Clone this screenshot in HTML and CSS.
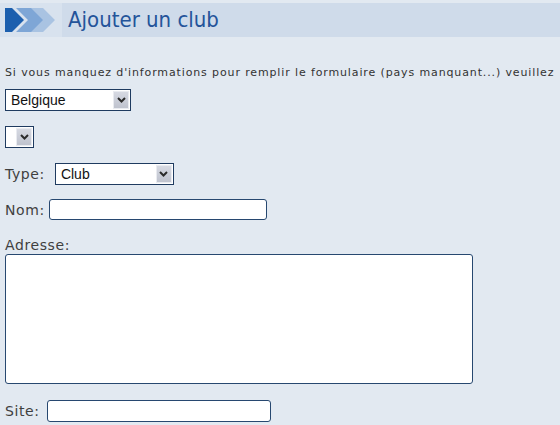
FILE: index.html
```html
<!DOCTYPE html>
<html lang="fr">
<head>
    <meta charset="UTF-8">
    <title>Ajouter un club</title>
    <link rel="stylesheet" href="styles.css">
</head>
<body>
    <div class="header">
        <div class="header-icon">
            <svg width="60" height="34" viewBox="0 0 60 34">
                <polygon points="28,5 43,5 55,17 43,29 28,29 40,17" fill="#a9c3e2"/>
                <polygon points="16,5 31,5 43,17 31,29 16,29 28,17" fill="#7ea6d6"/>
                <polygon points="5,5 12,5 24,17 12,29 5,29" fill="#1c5fae"/>
            </svg>
        </div>
        <h1>Ajouter un club</h1>
    </div>

    <div class="content">
        <p class="info">Si vous manquez d'informations pour remplir le formulaire (pays manquant...) veuillez</p>

        <div class="row">
            <div class="select-box country">
                <select id="country">
                    <option>Belgique</option>
                </select>
                <span class="arrow"><svg width="9" height="6" viewBox="0 0 9 6"><path d="M1 1 L4.5 4.5 L8 1" fill="none" stroke="#2b2b2b" stroke-width="2"/></svg></span>
            </div>
        </div>

        <div class="row">
            <div class="select-box empty">
                <select id="region"></select>
                <span class="arrow"><svg width="9" height="6" viewBox="0 0 9 6"><path d="M1 1 L4.5 4.5 L8 1" fill="none" stroke="#2b2b2b" stroke-width="2"/></svg></span>
            </div>
        </div>

        <div class="row row-type">
            <label for="type">Type:</label>
            <div class="select-box type">
                <select id="type">
                    <option>Club</option>
                </select>
                <span class="arrow"><svg width="9" height="6" viewBox="0 0 9 6"><path d="M1 1 L4.5 4.5 L8 1" fill="none" stroke="#2b2b2b" stroke-width="2"/></svg></span>
            </div>
        </div>

        <div class="row row-nom">
            <label for="nom">Nom:</label>
            <input type="text" id="nom" class="text-input nom">
        </div>

        <label for="adresse" class="block-label">Adresse:</label>
        <textarea id="adresse"></textarea>

        <div class="row row-site">
            <label for="site">Site:</label>
            <input type="text" id="site" class="text-input site">
        </div>
    </div>
</body>
</html>
```

FILE: styles.css
```css
* {
    margin: 0;
    padding: 0;
    box-sizing: border-box;
}

body {
    background-color: #e2e9f1;
    font-family: "DejaVu Sans", Verdana, sans-serif;
    color: #3a3a3a;
}

.header {
    display: flex;
    align-items: center;
    margin-top: 3px;
    height: 34px;
    background-color: #cfdbea;
}

.header-icon {
    width: 62px;
    height: 34px;
    background-color: #d8e2ee;
}

.header-icon svg {
    display: block;
}

.header h1 {
    margin-left: 6px;
    font-family: "DejaVu Sans Condensed", "DejaVu Sans", sans-serif;
    font-size: 22px;
    font-weight: normal;
    color: #24549a;
    line-height: 34px;
}

.content {
    padding-left: 5px;
}

.info {
    margin-top: 30px;
    font-size: 11px;
    line-height: 12px;
    letter-spacing: 0.87px;
    white-space: nowrap;
    color: #333;
}

.row {
    display: flex;
    align-items: center;
    gap: 7px;
    margin-top: 15px;
}

.info + .row {
    margin-top: 10px;
}

.row-type {
    gap: 10px;
}

.row-nom {
    margin-top: 14px;
    gap: 4px;
}

label {
    font-size: 14px;
    line-height: 16px;
    letter-spacing: 0.6px;
    color: #3f3f3f;
}

.select-box {
    display: flex;
    align-items: center;
    height: 22px;
    padding: 1px;
    background-color: white;
    border: 1px solid #1f3b60;
}

.select-box select {
    flex: 1;
    min-width: 0;
    height: 18px;
    border: none;
    background: transparent;
    appearance: none;
    -webkit-appearance: none;
    font-family: "Liberation Sans", Arial, sans-serif;
    font-size: 14px;
    color: #111;
    padding-left: 4px;
    outline: none;
}

.arrow {
    display: flex;
    align-items: center;
    justify-content: center;
    width: 16px;
    height: 18px;
    background: linear-gradient(#d6d9e2, #bfc3ce);
    border: 1px solid #e9ebf0;
}

.country {
    width: 126px;
}

.empty {
    width: 29px;
}

.type {
    width: 119px;
}

.text-input {
    height: 21px;
    border: 1px solid #274870;
    border-radius: 3px;
    background-color: white;
    outline: none;
}

.nom {
    width: 218px;
}

.block-label {
    display: block;
    margin-top: 17px;
}

textarea {
    display: block;
    margin-top: 1px;
    width: 468px;
    height: 130px;
    border: 1px solid #274870;
    border-radius: 3px;
    background-color: white;
    resize: none;
    outline: none;
}

.row-site {
    margin-top: 16px;
}

.site {
    width: 224px;
    height: 22px;
}
```
